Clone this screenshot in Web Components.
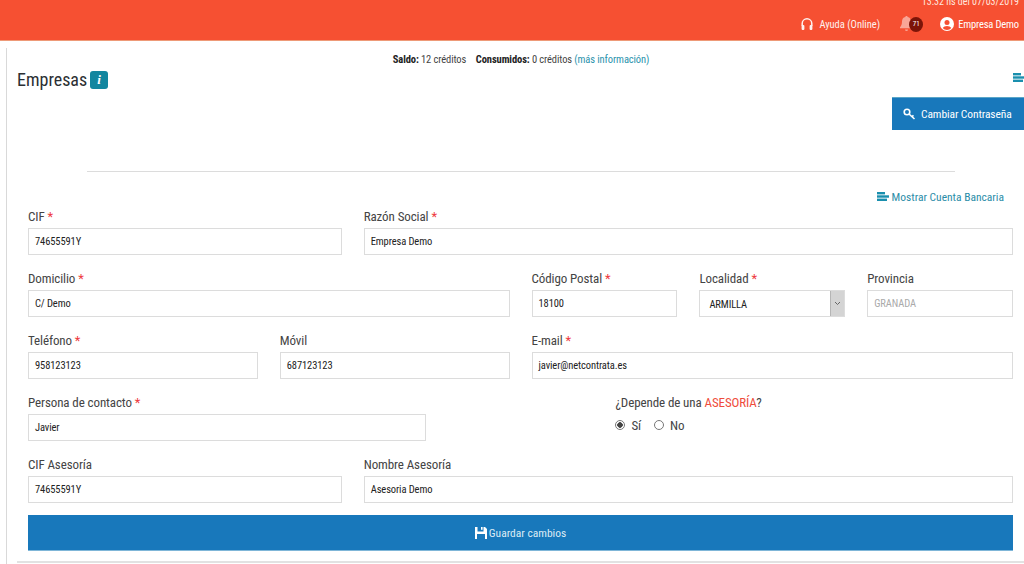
<!DOCTYPE html>
<html lang="es">
<head>
<meta charset="utf-8">
<title>Empresas</title>
<style>
  html, body { margin: 0; height: 564px; overflow: hidden; background: #fff; }
  body { font-family: "Roboto Condensed", Roboto, "Liberation Sans", sans-serif; font-stretch: 75%; color: #333; }
</style>
</head>
<body>
<app-header></app-header>
<main-panel>
  <form-grid>
    <form-field span="4" label="CIF" required value="74655591Y"></form-field>
    <form-field span="8" label="Razón Social" required value="Empresa Demo"></form-field>
    <form-field span="6" label="Domicilio" required value="C/ Demo"></form-field>
    <form-field span="2" label="Código Postal" required value="18100"></form-field>
    <form-field span="2" label="Localidad" required value="ARMILLA" type="select"></form-field>
    <form-field span="2" label="Provincia" value="GRANADA" type="disabled"></form-field>
    <form-field span="3" label="Teléfono" required value="958123123"></form-field>
    <form-field span="3" label="Móvil" value="687123123"></form-field>
    <form-field span="6" label="E-mail" required value="javier@netcontrata.es"></form-field>
    <form-field span="5" label="Persona de contacto" required value="Javier"></form-field>
    <radio-field></radio-field>
    <form-field span="4" label="CIF Asesoría" value="74655591Y"></form-field>
    <form-field span="8" label="Nombre Asesoría" value="Asesoria Demo"></form-field>
  </form-grid>
</main-panel>

<script>
const barsIcon = `<svg width="12" height="10" viewBox="0 0 12 10" fill="#1a8fae"><rect width="8" height="2.4"/><rect y="3.3" width="12" height="2.4"/><rect y="6.6" width="10" height="2.4"/></svg>`;

class AppHeader extends HTMLElement {
  constructor() {
    super();
    this.attachShadow({ mode: 'open' });
    this.shadowRoot.innerHTML = `
      <style>
        :host { display: block; height: 40px; background: #f65032; border-bottom: 1px solid #ee9a78; color: #fff; overflow: hidden;
          font-size: 10.5px; padding-right: 5px; }
        .time { text-align: right; line-height: 12px; margin-top: -4px; font-size: 10px; color: #ffe6df; }
        .nav { display: flex; justify-content: flex-end; align-items: center; height: 16px; margin-top: 8px; }
        .item { display: flex; align-items: center; gap: 4px; }
        .user span { letter-spacing: -.15px; }
        .help { margin-right: 20px; gap: 6px; opacity: .92; }
        .bell { position: relative; width: 23px; height: 16px; margin-right: 17px; }
        .bell svg { position: absolute; left: 0; top: 0; }
        .badge { position: absolute; left: 9px; top: 1px; width: 14px; height: 15px; border-radius: 50%; background: #7c1408; font-size: 7px;
          line-height: 15px; text-align: center; }
      </style>
      <div class="time">13:32 hs del 07/03/2019</div>
      <div class="nav">
        <div class="item help">
          <svg width="12" height="13" viewBox="0 0 12 13" fill="none" stroke="#fff"><path stroke-width="1.5" d="M1.2 8V5.6a4.8 4.8 0 0 1 9.6 0V8"/><rect x=".6" y="7" width="2.8" height="5" rx="1" fill="#fff" stroke="none"/><rect x="8.6" y="7" width="2.8" height="5" rx="1" fill="#fff" stroke="none"/></svg>
          <span>Ayuda (Online)</span>
        </div>
        <div class="bell">
          <svg width="13" height="15" viewBox="0 0 13 15" fill="#f9a596"><path d="M6.5 0c.7 0 1.2.5 1.2 1.1 2.2.5 3.3 2.3 3.3 4.5 0 3 .8 4.4 2 5.6v1H0v-1c1.200-1.200 2-2.600 2-5.600 0-2.200 1.100-4 3.300-4.500C5.300.5 5.800 0 6.500 0zM5 13.500h3A1.500 1.500 0 0 1 5 13.500z"/></svg>
          <span class="badge">71</span>
        </div>
        <div class="item user">
          <svg width="14" height="14" viewBox="0 0 14 14"><circle cx="7" cy="7" r="7" fill="#fff"/><circle cx="7" cy="5.400" r="2.500" fill="#f65032"/><path d="M2.600 11a5 3.800 0 0 1 8.800 0A6 6 0 0 1 2.600 11z" fill="#f65032"/></svg>
          <span>Empresa Demo</span>
        </div>
      </div>`;
  }
}

class MainPanel extends HTMLElement {
  constructor() {
    super();
    this.attachShadow({ mode: 'open' });
    this.shadowRoot.innerHTML = `
      <style>
        :host { display: block; position: relative; margin: 7px 0 0 6px; border-left: 1px solid #d9d9d9; height: 516px; font-size: 11px; }
        .saldo { text-align: center; font-size: 10.5px; line-height: 12px; padding: 6px 0 0 11px; color: #444; letter-spacing: -.1px; }
        .saldo b { color: #222; margin-left: 5px; }
        .saldo b:first-child { margin-left: 0; }
        .saldo a { color: #2a93ad; }
        .head { display: flex; justify-content: space-between; height: 22px; margin-top: 3px; padding-left: 10px; }
        h1 { margin: 0; display: flex; align-items: center; gap: 3px; font-size: 18px; font-weight: 400; line-height: 22px; color: #2b2f33; }
        .info { width: 18px; height: 18px; border-radius: 3px; background: #12869f; color: #fff; font: italic 700 13px/18px "Liberation Serif", serif; text-align: center; }
        .side { width: 11px; overflow: hidden; padding-top: 4px; height: 12px; }
        .pass { display: flex; justify-content: flex-end; margin-top: 6px; }
        .pass div { width: 132px; height: 33px; box-sizing: border-box; background: #1878bb; color: #fff; border-top: 1px solid #5aa6c8; display: flex; align-items: center; gap: 5px;
          padding-left: 11px; font-size: 11.5px; letter-spacing: -.1px; }
        hr { border: 0; border-top: 1px solid #dcdcdc; margin: 41px 69px 0 80px; }
        .link { display: flex; justify-content: flex-end; align-items: center; gap: 3px; margin: 18px 20px 0 0; height: 14px; font-size: 11.5px; color: #2b8da8; }
        .save { margin: 12px 11px 0 21px; height: 36px; background: #1878bb; color: #dcebf5; display: flex; align-items: center; justify-content: center; gap: 2px;
          font-size: 11.5px; box-sizing: border-box; padding-top: 1px; border-bottom: 1px solid #7fb6d8; }
        .rule { position: absolute; left: 10px; right: 0; bottom: 1px; border-top: 2px solid #e2e2e2; }
      </style>
      <div class="saldo"><b>Saldo:</b> 12 créditos &nbsp;<b>Consumidos:</b> 0 créditos <a>(más información)</a></div>
      <div class="head">
        <h1>Empresas <span class="info">i</span></h1>
        <div class="side">${barsIcon}</div>
      </div>
      <div class="pass"><div>
        <svg width="13" height="12" viewBox="0 0 13 12" fill="none" stroke="#fff" stroke-width="1.600"><circle cx="4" cy="4" r="2.800"/><path d="M6 6l5.500 5M9 8.600l1.500-1.300"/></svg>
        <span>Cambiar Contraseña</span>
      </div></div>
      <hr>
      <div class="link">${barsIcon}<span>Mostrar Cuenta Bancaria</span></div>
      <slot></slot>
      <div class="save">
        <svg width="12" height="12" viewBox="0 0 12 12" fill="#fff"><path d="M0 0h2.500v4.500h6V0H10l2 2v10h-2V7H2v5H0z"/><rect x="6" y="0" width="1.600" height="2.800"/></svg>
        <span>Guardar cambios</span>
      </div>
      <div class="rule"></div>`;
  }
}

class FormGrid extends HTMLElement {
  constructor() {
    super();
    this.attachShadow({ mode: 'open' });
    this.shadowRoot.innerHTML = `
      <style>
        :host { display: grid; grid-template-columns: repeat(12, 61.93px); column-gap: 22px; row-gap: 16px; margin: 5px 0 0 21px; }
      </style>
      <slot></slot>`;
  }
}

class FormField extends HTMLElement {
  connectedCallback() {
    if (this.shadowRoot) return;
    this.attachShadow({ mode: 'open' });
    const span = this.getAttribute('span') || 12;
    const type = this.getAttribute('type') || 'text';
    const star = this.hasAttribute('required') ? ' <i>*</i>' : '';
    this.style.gridColumn = `span ${span}`;
    this.shadowRoot.innerHTML = `
      <style>
        :host { display: block; }
        label { display: block; height: 16px; line-height: 16px; font-size: 13px; color: #444; margin-bottom: 3px; letter-spacing: -.1px; }
        i { color: #ee3a3e; font-style: normal; }
        .box { height: 27px; box-sizing: border-box; border: 1px solid #dcdcdc; background: #fff; padding-left: 6px; font-size: 10.5px; font-weight: 400;
          line-height: 25px; color: #222; position: relative; letter-spacing: -.1px; }
        .disabled { color: #aaa; }
        .select { padding-left: 9px; line-height: 27px; }
        .arrow { position: absolute; top: 0; right: 0; bottom: 0; width: 13px; background: #d4d4d4; border-left: 1px solid #b5b5b5; display: flex; align-items: center; justify-content: center; }
      </style>
      <label>${this.getAttribute('label')}${star}</label>
      <div class="box ${type}">${this.getAttribute('value')}${type === 'select' ? `<span class="arrow"><svg width="7" height="5" viewBox="0 0 7 5" fill="none" stroke="#666"><path d="M1 1l2.500 2.500L6 1"/></svg></span>` : ''}</div>`;
  }
}

class RadioField extends HTMLElement {
  constructor() {
    super();
    this.attachShadow({ mode: 'open' });
    this.shadowRoot.innerHTML = `
      <style>
        :host { display: block; grid-column: 8 / span 5; font-size: 13px; color: #444; letter-spacing: -.1px; }
        .q { height: 16px; line-height: 16px; }
        em { color: #ef4c3c; font-style: normal; }
        .opts { display: flex; align-items: center; margin-top: 6px; height: 16px; gap: 6px; }
        .r { width: 10px; height: 10px; box-sizing: border-box; border: 1px solid #777; border-radius: 50%; background: #fff; }
        .r.on { background: radial-gradient(circle, #444 0 2.500px, #fff 3px); }
        .opts span:nth-of-type(1) { margin-right: 7px; }
      </style>
      <div class="q">¿Depende de una <em>ASESORÍA</em>?</div>
      <div class="opts"><div class="r on"></div><span>Sí</span><div class="r"></div><span>No</span></div>`;
  }
}

customElements.define('app-header', AppHeader);
customElements.define('main-panel', MainPanel);
customElements.define('form-grid', FormGrid);
customElements.define('form-field', FormField);
customElements.define('radio-field', RadioField);
</script>
</body>
</html>
